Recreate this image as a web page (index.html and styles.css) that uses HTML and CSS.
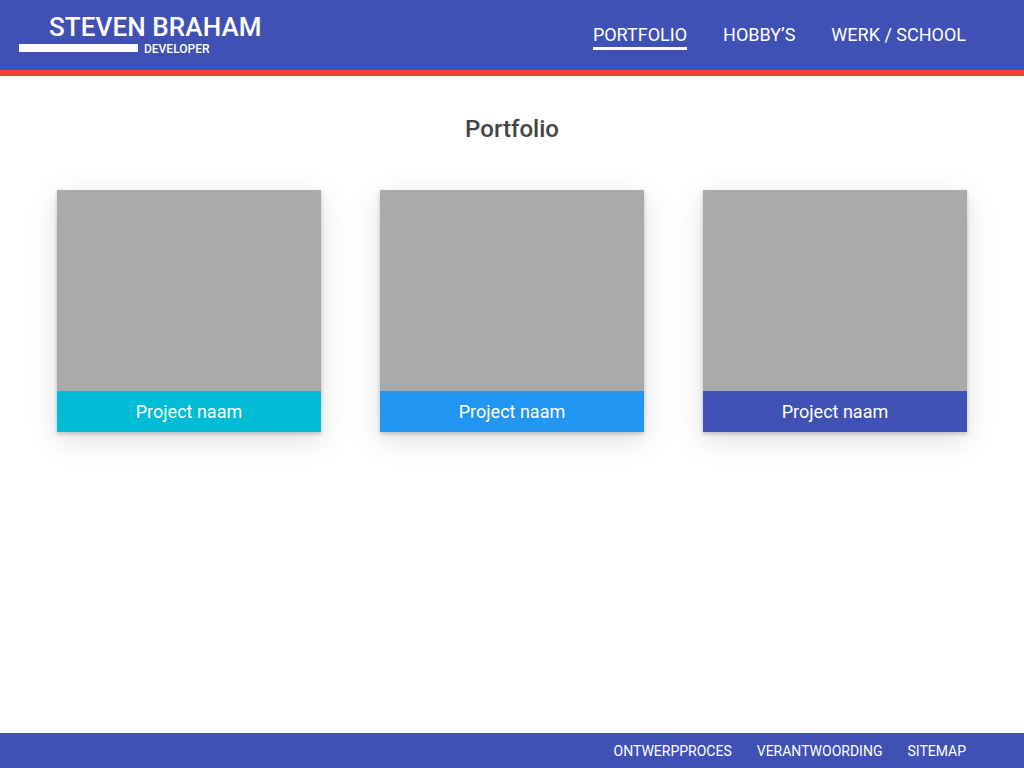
FILE: index.html
```html
<!DOCTYPE html>
<html lang="nl">
<head>
<meta charset="utf-8">
<title>Steven Braham - Portfolio</title>
<link rel="stylesheet" href="styles.css">
</head>
<body>
<header class="site-header">
  <a class="logo" href="#">
    <span class="logo-name">STEVEN BRAHAM</span>
    <span class="logo-sub"><span class="logo-bar"></span><span class="logo-role">DEVELOPER</span></span>
  </a>
  <nav class="main-nav">
    <a class="nav-link active" href="#">PORTFOLIO</a>
    <a class="nav-link" href="#">HOBBY’S</a>
    <a class="nav-link" href="#">WERK / SCHOOL</a>
  </nav>
</header>
<main class="content">
  <h1 class="page-title">Portfolio</h1>
  <div class="cards">
    <a class="card" href="#"><div class="card-image"></div><div class="card-label cyan">Project naam</div></a>
    <a class="card" href="#"><div class="card-image"></div><div class="card-label blue">Project naam</div></a>
    <a class="card" href="#"><div class="card-image"></div><div class="card-label indigo">Project naam</div></a>
  </div>
</main>
<footer class="site-footer">
  <a class="foot-link" href="#">ONTWERPPROCES</a>
  <a class="foot-link" href="#">VERANTWOORDING</a>
  <a class="foot-link" href="#">SITEMAP</a>
</footer>
</body>
</html>
```
FILE: styles.css
```css
* { box-sizing: border-box; }
html, body { margin: 0; padding: 0; }
body {
  height: 100vh;
  display: flex;
  flex-direction: column;
  font-family: Roboto, "Liberation Sans", sans-serif;
  background: #fff;
  color: #444;
  overflow: hidden;
}
a { text-decoration: none; color: inherit; }

.site-header {
  height: 76px;
  background: #3f51b5;
  border-bottom: 6px solid #f44336;
  display: flex;
  justify-content: space-between;
  align-items: flex-start;
  padding: 0 58px 0 19px;
  color: #fff;
  flex: none;
}
.logo {
  display: flex;
  flex-direction: column;
  padding-top: 14px;
}
.logo-name {
  font-size: 26px;
  line-height: 26px;
  font-weight: 500;
  padding-left: 30px;
  letter-spacing: 0.1px;
}
.logo-sub {
  display: flex;
  align-items: flex-start;
  margin-top: 3px;
}
.logo-bar {
  width: 119px;
  height: 8px;
  background: #fff;
  margin-top: 1px;
}
.logo-role {
  font-size: 12px;
  line-height: 12px;
  font-weight: 500;
  margin-left: 6px;
}
.main-nav {
  display: flex;
  gap: 36px;
  padding-top: 24px;
}
.nav-link {
  font-size: 18px;
  line-height: 21px;
  padding-bottom: 2px;
  border-bottom: 3px solid transparent;
}
.nav-link.active { border-bottom-color: #fff; }

.content {
  flex: 1;
  display: flex;
  flex-direction: column;
  align-items: center;
}
.page-title {
  margin: 39px 0 47px;
  font-size: 24px;
  line-height: 28px;
  font-weight: 500;
  color: #444;
}
.cards {
  display: flex;
  gap: 59px;
}
.card {
  width: 264px;
  display: flex;
  flex-direction: column;
  box-shadow: 0 8px 28px rgba(0,0,0,0.13), 0 2px 4px rgba(0,0,0,0.2);
}
.card-image {
  height: 201px;
  background: #aaaaaa;
}
.card-label {
  height: 41px;
  line-height: 41px;
  text-align: center;
  color: #fff;
  font-size: 18px;
}
.cyan { background: #00bcd4; }
.blue { background: #2196f3; }
.indigo { background: #3f51b5; }

.site-footer {
  flex: none;
  height: 35px;
  background: #3f51b5;
  display: flex;
  justify-content: flex-end;
  align-items: center;
  gap: 25px;
  padding: 0 58px 0 0;
  color: #fff;
}
.foot-link {
  font-size: 14px;
  line-height: 16px;
}
```
